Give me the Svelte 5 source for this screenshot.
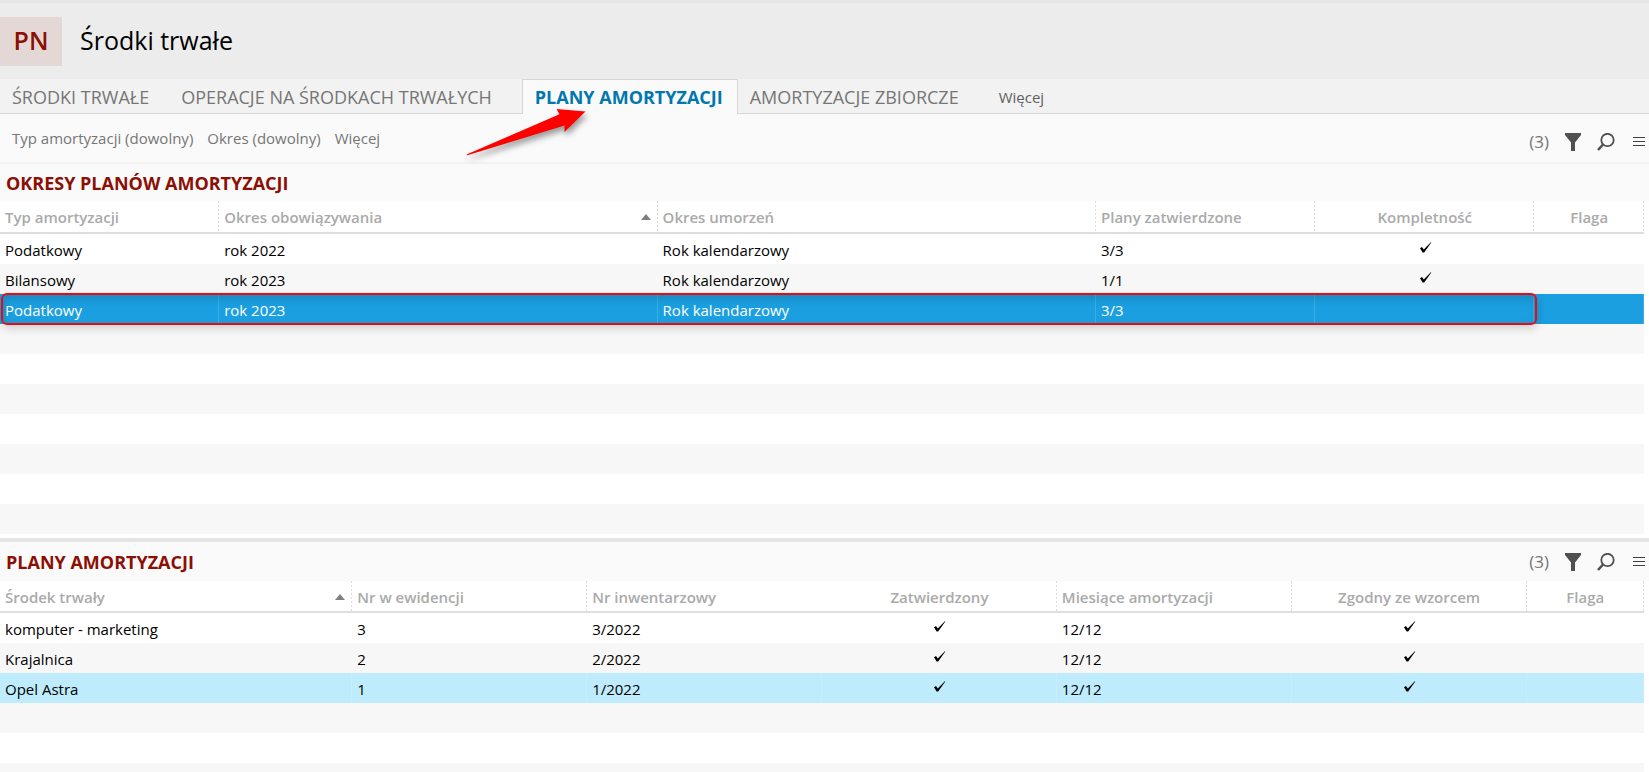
<script>
  let activeTab = "PLANY AMORTYZACJI";

  const tabs = [
    "ŚRODKI TRWAŁE",
    "OPERACJE NA ŚRODKACH TRWAŁYCH",
    "PLANY AMORTYZACJI",
    "AMORTYZACJE ZBIORCZE"
  ];

  const panes = [
    {
      id: "periods",
      title: "OKRESY PLANÓW AMORTYZACJI",
      parts: 15,
      fillers: 7,
      columns: [
        { label: "Typ amortyzacji", parts: 2 },
        { label: "Okres obowiązywania", parts: 4, sorted: true },
        { label: "Okres umorzeń", parts: 4 },
        { label: "Plany zatwierdzone", parts: 2 },
        { label: "Kompletność", parts: 2, center: true },
        { label: "Flaga", parts: 1, center: true }
      ],
      rows: [
        ["Podatkowy", "rok 2022", "Rok kalendarzowy", "3/3", true, ""],
        ["Bilansowy", "rok 2023", "Rok kalendarzowy", "1/1", true, ""],
        ["Podatkowy", "rok 2023", "Rok kalendarzowy", "3/3", false, ""]
      ]
    },
    {
      id: "plans",
      title: "PLANY AMORTYZACJI",
      parts: 14,
      fillers: 3,
      columns: [
        { label: "Środek trwały", parts: 3, sorted: true },
        { label: "Nr w ewidencji", parts: 2 },
        { label: "Nr inwentarzowy", parts: 2, plain: true },
        { label: "Zatwierdzony", parts: 2, center: true },
        { label: "Miesiące amortyzacji", parts: 2 },
        { label: "Zgodny ze wzorcem", parts: 2, center: true },
        { label: "Flaga", parts: 1, center: true }
      ],
      rows: [
        ["komputer - marketing", "3", "3/2022", true, "12/12", true, ""],
        ["Krajalnica", "2", "2/2022", true, "12/12", true, ""],
        ["Opel Astra", "1", "1/2022", true, "12/12", true, ""]
      ]
    }
  ];

  let selected = { periods: 2, plans: 2 };
</script>

{#snippet tools()}
  <div class="tools">
    <span class="count">(3)</span>
    <button class="tool" aria-label="Filtruj">
      <svg width="16" height="18" viewBox="0 0 16 18">
        <path d="M0 0H16V2L10 9.500V18H6V9.500L0 2Z" fill="#505050" />
      </svg>
    </button>
    <button class="tool" aria-label="Szukaj">
      <svg width="18" height="18" viewBox="0 0 18 18" fill="none" stroke="#505050">
        <circle cx="10.500" cy="7" r="6.200" stroke-width="1.800" />
        <path d="M6 11.500L1 17" stroke-width="2.600" />
      </svg>
    </button>
    <button class="tool menu" aria-label="Menu">
      <svg width="12" height="9" viewBox="0 0 12 9">
        <path d="M0 .5H12M0 4.500H12M0 8.500H12" stroke="#404040" />
      </svg>
    </button>
  </div>
{/snippet}

{#snippet grid(pane)}
  <div class="grid">
    <table class={pane.id}>
      <colgroup>
        {#each pane.columns as col}
          <col style="width: {col.parts / pane.parts * 100}%" />
        {/each}
      </colgroup>
      <thead>
        <tr>
          {#each pane.columns as col}
            <th class:center={col.center} class:plain={col.plain}>
              <div class="label">
                {col.label}
                {#if col.sorted}
                  <svg class="sort" width="10" height="6" viewBox="0 0 10 6">
                    <path d="M5 0L10 6H0Z" fill="#808080" />
                  </svg>
                {/if}
              </div>
            </th>
          {/each}
        </tr>
      </thead>
      <tbody>
        {#each pane.rows as row, i}
          <tr class:selected={selected[pane.id] === i} on:click={() => selected[pane.id] = i}>
            {#each row as cell, c}
              <td class:center={pane.columns[c].center}>
                {#if cell === true}
                  <svg class="check" width="12" height="11" viewBox="0 0 12 11" role="img" aria-label="tak">
                    <path d="M0 6.200L2 5L3.800 7.600L10.800 0.200L11.300 0.600L4.200 10.400H2.600Z" fill="#000" />
                  </svg>
                {:else}
                  {cell || ""}
                {/if}
                {#if pane.id === "periods" && i === 2 && c === 0}
                  <span class="marker"></span>
                {/if}
              </td>
            {/each}
          </tr>
        {/each}
        {#each Array(pane.fillers) as _}
          <tr><td colspan={pane.columns.length}></td></tr>
        {/each}
      </tbody>
    </table>
  </div>
{/snippet}

<main class="app">
  <header class="header">
    <div class="badge">PN</div>
    <h1>Środki trwałe</h1>
  </header>

  <nav class="tabs">
    {#each tabs as tab}
      <button class="tab" class:active={tab === activeTab} on:click={() => activeTab = tab}>{tab}</button>
    {/each}
    <button class="tab more">Więcej</button>
    <svg class="arrow" width="140" height="64" viewBox="0 0 140 64">
      <path d="M6.500 54.500L99.500 14.200L96.500 9L125.500 11.500L104.500 32L104.500 25.500L7.500 55.200Z" fill="#fe0000" />
    </svg>
  </nav>

  <div class="filters">
    <button class="filter">Typ amortyzacji (dowolny)</button>
    <button class="filter">Okres (dowolny)</button>
    <button class="filter">Więcej</button>
    {@render tools()}
  </div>

  <section>
    <div class="caption">
      <h2>{panes[0].title}</h2>
    </div>
    {@render grid(panes[0])}
  </section>

  <section class="details">
    <div class="caption">
      <h2>{panes[1].title}</h2>
      {@render tools()}
    </div>
    {@render grid(panes[1])}
  </section>
</main>

<style>
  :global(body) {
    overflow: hidden;
  }

  .app {
    height: 100vh;
    overflow: hidden;
    background: #fff;
    color: #000;
    font-family: "Open Sans", "Noto Sans", sans-serif;
    font-size: 15px;
    line-height: 20px;
  }

  button {
    padding: 0;
    border: 0;
    background: none;
    font: inherit;
    color: inherit;
    white-space: nowrap;
    cursor: pointer;
  }

  h1,
  h2 {
    margin: 0;
  }

  svg {
    display: block;
  }

  .header {
    display: flex;
    align-items: center;
    gap: 18px;
    box-sizing: border-box;
    height: 79px;
    border-top: 3px solid #e5e5e5;
    background: #ececec;
  }

  .badge {
    width: 62px;
    height: 49px;
    background: #e3d8d6;
    color: #8b0f04;
    font-size: 25px;
    font-weight: 600;
    line-height: 47px;
    text-align: center;
  }

  h1 {
    font-size: 25px;
    font-weight: 400;
    line-height: 47px;
    padding-bottom: 2px;
  }

  .tabs {
    position: relative;
    display: flex;
    height: 35px;
    background: #f2f2f2;
    box-shadow: inset 0 -1px #d6d6d6;
    color: #767676;
    font-size: 18px;
  }

  .tab {
    box-sizing: border-box;
    padding: 0 20px 0 12px;
  }

  .tab.active {
    margin-left: 10px;
    padding: 0 14px 0 12px;
    border: 1px solid #d6d6d6;
    border-bottom: 0;
    background: #fafafa;
    color: #0077ae;
    font-weight: 700;
  }

  .tab.more {
    padding-left: 20px;
    font-size: 15px;
    color: #606060;
  }

  /* lies over the tabs and the filter bar */
  .arrow {
    position: absolute;
    top: 21px;
    left: 460px;
    z-index: 2;
    overflow: visible;
    filter: drop-shadow(2px 4px 3px rgba(0, 0, 0, 0.4));
    pointer-events: none;
  }

  .filters {
    display: flex;
    align-items: center;
    gap: 14px;
    box-sizing: border-box;
    height: 50px;
    padding-left: 12px;
    border-bottom: 2px solid #f2f2f2;
    background: #fafafa;
    color: #767676;
  }

  .tools {
    display: flex;
    align-items: center;
    gap: 16px;
    margin-left: auto;
    padding-right: 4px;
    color: #767676;
    font-size: 17px;
  }

  .filters .tools {
    padding-top: 7px;
  }

  .menu {
    margin-left: 2px;
  }

  .caption {
    display: flex;
    align-items: center;
    height: 37px;
    padding-left: 6px;
    background: #fafafa;
  }

  h2 {
    color: #8b0f04;
    font-size: 18px;
    font-weight: 700;
  }

  .details {
    margin-top: 4px;
    border-top: 4px solid #e4e4e4;
  }

  .details .caption {
    height: 39px;
  }

  .grid {
    padding-right: 5px;
  }

  table {
    width: 100%;
    table-layout: fixed;
    border-collapse: separate;
    border-spacing: 0;
  }

  th,
  td {
    box-sizing: border-box;
    padding: 0 7px 0 5px;
    text-align: left;
    white-space: nowrap;
  }

  th {
    height: 33px;
    border-bottom: 2px solid #dedede;
    background: linear-gradient(#dcdcdc 50%, transparent 50%) right top / 1px 4px repeat-y;
    color: #aaa;
    font-weight: 600;
  }

  th.plain {
    background: none;
  }

  th.center {
    padding-left: 7px;
  }

  .label {
    display: flex;
    align-items: center;
    justify-content: space-between;
  }

  .center .label {
    justify-content: center;
  }

  .plans th {
    height: 32px;
    padding-top: 2px;
  }

  td {
    height: 30px;
    padding-top: 2px;
  }

  tbody tr:nth-child(even) {
    background: #f7f7f7;
  }

  tbody tr.selected {
    position: relative;
    background: #bfecfd;
  }

  .selected td {
    box-shadow: inset -1px 0 rgba(255, 255, 255, 0.15);
  }

  .periods tr.selected {
    background: #1b9fe0;
    color: #fff;
  }

  .check {
    margin: 0 auto 5px;
  }

  td.center {
    padding-left: 9px;
  }

  .marker {
    position: absolute;
    top: -1px;
    bottom: -1px;
    left: 1px;
    right: calc(100% / 15 - 3px);
    border: 2px solid #ec0a12;
    border-radius: 6px;
    box-shadow: 1px 4px 8px rgba(0, 0, 0, 0.15), inset 1px 4px 8px rgba(0, 0, 0, 0.15);
  }
</style>
